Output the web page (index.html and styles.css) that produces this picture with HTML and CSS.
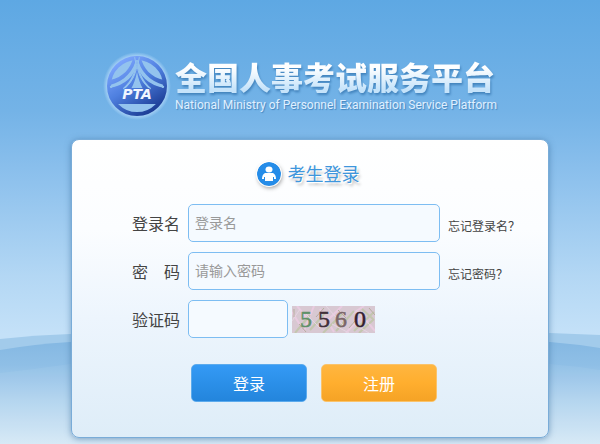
FILE: index.html
```html
<!DOCTYPE html>
<html lang="zh-CN">
	<head>
		<meta charset="utf-8">
		<title>全国人事考试服务平台</title>
		<link rel="stylesheet" href="styles.css">
	</head>
	<body>
		<!-- hills behind the login box -->
		<svg class="hills" viewBox="0 0 600 114" preserveAspectRatio="none" aria-hidden="true">
			<defs>
				<linearGradient id="hill" x1="0" y1="0" x2="0" y2="114" gradientUnits="userSpaceOnUse">
					<stop offset="0" stop-color="#80b5e1"/>
					<stop offset=".3" stop-color="#8fbfe6"/>
					<stop offset=".62" stop-color="#b2d4ef"/>
					<stop offset="1" stop-color="#d6e9f6"/>
				</linearGradient>
			</defs>
			<path fill="#a2cbeb" d="M0 8Q35 4 70 3L550 2Q575 3 600 4V114H0Z"/>
			<path fill="url(#hill)" d="M0 19Q35 13 70 11H550Q575 13 600 17V114H0Z"/>
			<path fill="#fff" opacity=".05" d="M0 42Q35 38 70 33H550Q575 35 600 39V114H0Z"/>
		</svg>
		<div class="page">
			<div class="header">
				<svg class="logo" viewBox="0 0 68 68" aria-hidden="true">
					<defs>
						<linearGradient id="globe" x1="14" y1="8" x2="50" y2="64" gradientUnits="userSpaceOnUse">
							<stop offset="0" stop-color="#80a9ff"/>
							<stop offset=".45" stop-color="#4e7fdf"/>
							<stop offset="1" stop-color="#15348c"/>
						</linearGradient>
						<radialGradient id="glow">
							<stop offset=".84" stop-color="#a5d0f5"/>
							<stop offset=".9" stop-color="#a5d0f5" stop-opacity=".8"/>
							<stop offset="1" stop-color="#a5d0f5" stop-opacity="0"/>
						</radialGradient>
						<clipPath id="disc"><circle cx="34" cy="34" r="29"/></clipPath>
					</defs>
					<circle cx="34" cy="34" r="34" fill="url(#glow)"/>
					<circle cx="34" cy="34" r="28" fill="#93c3ee" stroke="url(#globe)" stroke-width="4"/>
					<g clip-path="url(#disc)">
						<path fill="url(#globe)" d="M4 36H64V52H4Z"/>
						<g fill="url(#globe)">
							<path d="M31 3H34C32 18 22 29 7 33V28C21 25 28 16 31 3Z"/>
							<path d="M37 3H34C36 18 46 29 61 33V28C47 25 40 16 37 3Z"/>
							<path d="M34 7C31 23 23 32 9 35V39H16C26 33 32 22 34 7Z"/>
							<path d="M34 7C37 23 45 32 59 35V39H52C42 33 36 22 34 7Z"/>
							<path d="M34 10C33 22 29 30 22 37H28Q32 30 34 20Q36 30 40 37H46C39 30 35 22 34 10Z"/>
						</g>
						<g fill="none" stroke="#93c3ee">
							<path d="M31 2L33 12M37 2L35 12"/>
							<path stroke-width="2" d="M33 12C31 23 22 32 7 35M35 12C37 23 46 32 61 35"/>
							<path d="M34 14C32 24 28 32 20 37M34 14C36 24 40 32 48 37"/>
						</g>
					</g>
					<text class="logo-text" x="34" y="47" text-anchor="middle">PTA</text>
				</svg>
				<div class="names">
					<h1>全国人事考试服务平台</h1>
					<p>National Ministry of Personnel Examination Service Platform</p>
				</div>
			</div>
			<form class="login">
				<h2>
					<svg class="user" viewBox="0 0 24 24" aria-hidden="true">
						<circle cx="12" cy="12" r="12" fill="#258ce8"/>
						<ellipse cx="12" cy="7.500" rx="3.500" ry="3" fill="#fff"/>
						<path fill="#fff" d="M8 11H16Q19 12.500 19 17H16.500V19H7.500V17H5Q5 12.500 8 11Z"/>
						<path stroke="#258ce8" d="M7.500 15V19M16.500 15V19"/>
					</svg>
					<span>考生登录</span>
				</h2>
				<div class="row">
					<label for="username">登录名</label>
					<input id="username" type="text" placeholder="登录名">
					<a href="#">忘记登录名？</a>
				</div>
				<div class="row">
					<label for="password">密　码</label>
					<input id="password" type="password" placeholder="请输入密码">
					<a href="#">忘记密码？</a>
				</div>
				<div class="row">
					<label for="code">验证码</label>
					<div class="check">
						<input id="code" type="text">
						<svg class="captcha" viewBox="0 0 83 27" role="img" aria-label="5560">
							<rect width="83" height="27" fill="#d8c8d2"/>
							<g fill="none" stroke-width="2">
								<path stroke="#e9cbe0" d="M0 6L10 22M5 0L20 18M22 0L12 25M28 3L42 26M50 0L36 14M60 8L72 0M54 27L68 12M74 14L83 25"/>
								<path stroke="#c3c6ae" d="M3 27L18 9M18 24L34 6M31 27L50 8M44 25L62 5M62 25L82 6M67 27L82 13M70 3L81 13"/>
								<path stroke="#e5d5e2" stroke-width="1" d="M0 15L8 3M12 6L28 22M34 0L51 19M40 18L57 27M60 17L77 27M64 4L78 19"/>
								<path stroke="#b6ad9f" stroke-width="1" d="M7 18L14 26M24 11L32 2M46 4L54 12M57 22L63 15M77 2L83 9M2 3V11"/>
							</g>
							<g class="digits">
								<text x="8" y="21" fill="#5f9169" stroke="#5f9169">5</text>
								<text x="26" y="21" fill="#403039" stroke="#403039">5</text>
								<text x="43" y="21" fill="#7b6667" stroke="#7b6667">6</text>
								<text x="62" y="21" fill="#33202f" stroke="#33202f">0</text>
							</g>
						</svg>
					</div>
				</div>
				<div class="row buttons">
					<button class="btn-login" type="submit">登录</button>
					<button class="btn-register" type="button">注册</button>
				</div>
			</form>
		</div>
	</body>
</html>
```
FILE: styles.css
```css
* {
	box-sizing: border-box;
}
body {
	margin: 0;
	min-height: 100vh;
	position: relative;
	font-family: "Noto Sans CJK SC", sans-serif;
	color: #444;
	background: linear-gradient(#5ea8e3, #74b3e7 25%, #8abfec 38%, #b3d7f4 62%, #c4e1f8 75%);
}
h1, h2, p {
	margin: 0;
}
.hills {
	position: absolute;
	left: 0;
	bottom: 0;
	width: 100%;
	height: 114px;
}
.page {
	position: relative;
	max-width: 600px;
	margin: 0 auto;
	padding: 52px 51px 7px 71px;
}
.header {
	display: flex;
	align-items: center;
	gap: 4px;
	padding-left: 32px;
	margin-bottom: 19px;
}
.logo {
	flex: none;
	width: 68px;
	height: 68px;
}
.logo-text {
	font: italic bold 14px "DejaVu Sans", sans-serif;
	fill: #f0f5ff;
}
.names {
	white-space: nowrap;
}
h1 {
	font-size: 32px;
	line-height: 34px;
	font-weight: 900;
	color: transparent;
	background: linear-gradient(#fff 25%, #c5e3fa 90%);
	-webkit-background-clip: text;
	background-clip: text;
	filter: drop-shadow(1px 2px 1px #4384bd);
}
.names p {
	margin-top: 4px;
	font: 12px/16px Roboto, sans-serif;
	color: #e0f0ff;
	text-shadow: 1px 1px 1px #4384bd;
}
.login {
	display: flex;
	flex-direction: column;
	gap: 10px;
	padding: 20px 20px 35px 60px;
	border: 1px solid #79acd8;
	border-radius: 8px;
	background: linear-gradient(#fff, #fbfdff 30%, #edf5fd 60%, #deedf8);
	box-shadow: 0 1px 6px rgba(50, 100, 150, .55);
}
h2 {
	display: flex;
	align-items: center;
	justify-content: center;
	gap: 7px;
	/* centres the title on the box, which has more padding on the left */
	margin: 0 44px 7px 0;
	font-size: 18px;
	line-height: 27px;
	font-weight: 400;
	color: #3e96dc;
	text-shadow: 1px 1px 0 #fff, 2px 3px 3px #bbb;
}
.user {
	width: 24px;
	height: 24px;
	border-radius: 50%;
	box-shadow: 0 0 0 1px #fff, 1px 2px 4px #999;
}
.row {
	display: grid;
	grid-template-columns: 48px minmax(0, 252px) 1fr;
	column-gap: 8px;
	align-items: center;
}
label {
	font-size: 16px;
	white-space: nowrap;
}
input {
	width: 100%;
	height: 38px;
	padding: 0 6px 2px;
	border: 1px solid #7dbdf2;
	border-radius: 5px;
	background: #f5faff;
	font-family: inherit;
	font-size: 14px;
	color: #333;
}
input::placeholder {
	color: #999;
}
.row a {
	padding-top: 5px;
	font-size: 12px;
	white-space: nowrap;
	color: #444;
	text-decoration: none;
}
.check {
	display: flex;
	align-items: center;
	gap: 4px;
}
.check input {
	width: 100px;
}
.captcha {
	width: 83px;
	height: 27px;
}
.digits {
	font: 24px "Liberation Serif", serif;
	stroke-width: .5;
}
.buttons {
	display: flex;
	gap: 14px;
	width: 246px;
	margin: 16px 0 0 59px;
}
button {
	flex: 1;
	height: 38px;
	padding: 0;
	border: 1px solid;
	border-radius: 5px;
	font-family: inherit;
	font-size: 16px;
	color: #fff;
	cursor: pointer;
}
.btn-login {
	border-color: #5cabed;
	background: linear-gradient(#349af5, #2385dc);
}
.btn-register {
	border-color: #fac36b;
	background: linear-gradient(#ffb640, #ffae2e 50%, #f5a325);
}
```
